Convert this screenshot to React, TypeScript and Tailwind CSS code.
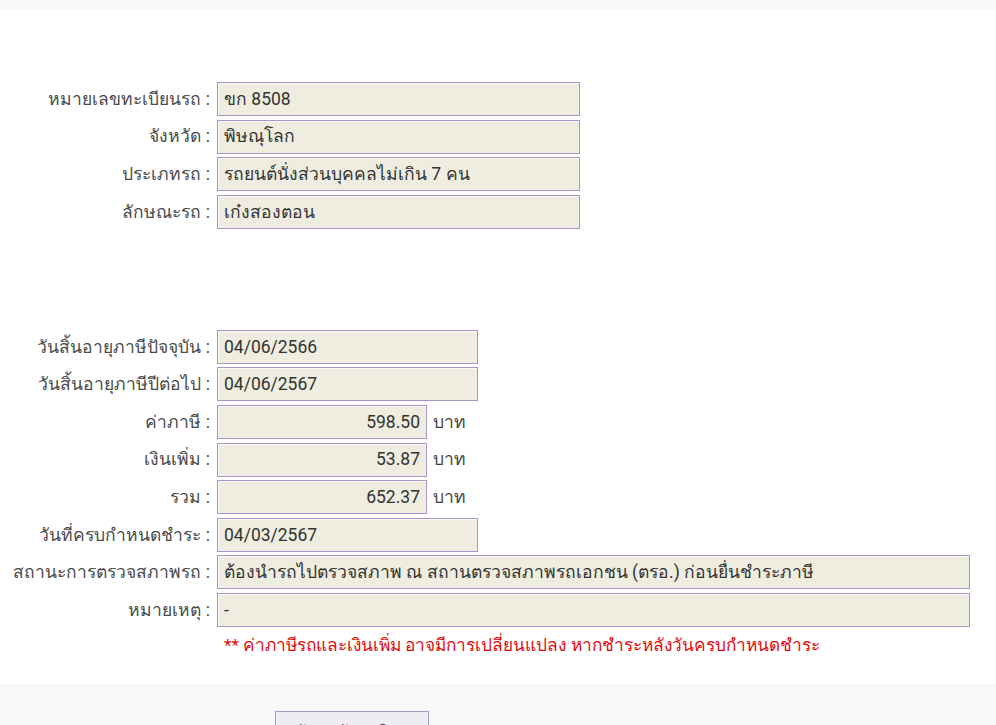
const box =
  'h-[34px] border border-[#aa93c6] bg-[#eeeddf] shadow-[inset_1px_1px_0_#fbfbf6] px-[6px] flex items-center text-[17.5px] text-[#333]';

function Row({ label, children }: { label: string; children: React.ReactNode }) {
  return (
    <div className="flex items-center">
      <div className="w-[211px] shrink-0 text-right pr-[1px] text-[17.5px] text-[#4a4a4a] whitespace-nowrap">{label} :</div>
      <div className="ml-[6px] flex items-center">{children}</div>
    </div>
  );
}

export default function App() {
  const vehicle = [
    { label: 'หมายเลขทะเบียนรถ', value: 'ขก 8508' },
    { label: 'จังหวัด', value: 'พิษณุโลก' },
    { label: 'ประเภทรถ', value: 'รถยนต์นั่งส่วนบุคคลไม่เกิน 7 คน' },
    { label: 'ลักษณะรถ', value: 'เก๋งสองตอน' },
  ];
  const money = [
    { label: 'ค่าภาษี', value: '598.50' },
    { label: 'เงินเพิ่ม', value: '53.87' },
    { label: 'รวม', value: '652.37' },
  ];

  return (
    <div className="min-h-screen bg-white font-['Roboto','Noto_Sans',sans-serif]">
      <div className="h-[10px] bg-[#fafafa]" />

      <div className="pt-[72px] flex flex-col gap-[3.6px]">
        {vehicle.map((v) => (
          <Row key={v.label} label={v.label}>
            <div className={`${box} w-[363px]`}>{v.value}</div>
          </Row>
        ))}
      </div>

      <div className="pt-[101px] flex flex-col gap-[3.6px]">
        <Row label="วันสิ้นอายุภาษีปัจจุบัน">
          <div className={`${box} w-[261px]`}>04/06/2566</div>
        </Row>
        <Row label="วันสิ้นอายุภาษีปีต่อไป">
          <div className={`${box} w-[261px]`}>04/06/2567</div>
        </Row>
        {money.map((m) => (
          <Row key={m.label} label={m.label}>
            <div className={`${box} w-[210px] justify-end`}>{m.value}</div>
            <span className="ml-[6px] text-[17.5px] text-[#444]">บาท</span>
          </Row>
        ))}
        <Row label="วันที่ครบกำหนดชำระ">
          <div className={`${box} w-[261px]`}>04/03/2567</div>
        </Row>
        <Row label="สถานะการตรวจสภาพรถ">
          <div className={`${box} w-[753px]`}>
            ต้องนำรถไปตรวจสภาพ ณ สถานตรวจสภาพรถเอกชน (ตรอ.) ก่อนยื่นชำระภาษี
          </div>
        </Row>
        <Row label="หมายเหตุ">
          <div className={`${box} w-[753px]`}>-</div>
        </Row>
        <div className="pl-[224px] pt-[2px] text-[17.3px] text-[#e00b0b]">
          ** ค่าภาษีรถและเงินเพิ่ม อาจมีการเปลี่ยนแปลง หากชำระหลังวันครบกำหนดชำระ
        </div>
      </div>

      <div className="mt-[26px] bg-[#f8f8f8] pt-[27px] pb-[20px] pl-[275px]">
        <button className="w-[154px] h-[44px] border border-[#a898c8] bg-[#efedf4] text-[16px] text-[#5b4a7a]">
          ค้นหาข้อมูลใหม่
        </button>
      </div>
    </div>
  );
}
